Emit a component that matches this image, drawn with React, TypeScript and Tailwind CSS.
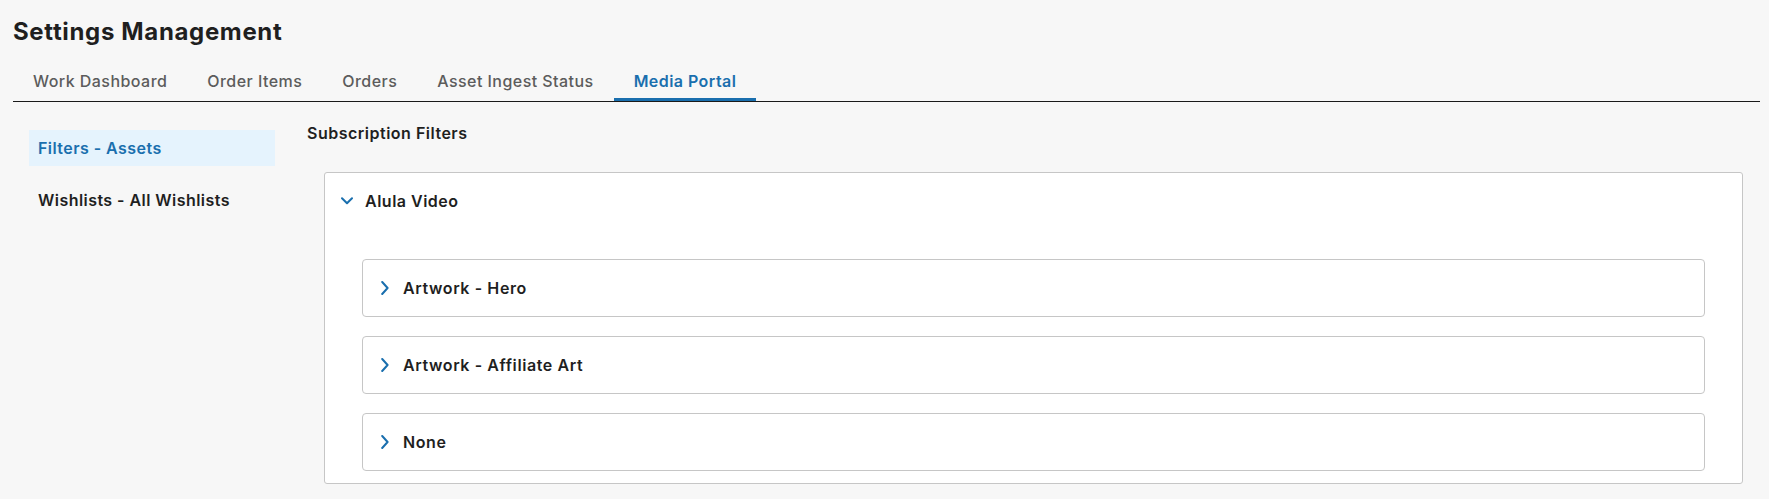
import React, { useState } from "react";

const tabs = ["Work Dashboard", "Order Items", "Orders", "Asset Ingest Status", "Media Portal"];
const sideItems = ["Filters - Assets", "Wishlists - All Wishlists"];
const groups = ["Artwork - Hero", "Artwork - Affiliate Art", "None"];

function CaretDown() {
  return (
    <svg width="12" height="8" viewBox="0 0 12 8" fill="none" className="shrink-0">
      <polyline points="1,1.2 6,6.2 11,1.2" stroke="#1a6fae" strokeWidth="2" strokeLinecap="round" strokeLinejoin="round" />
    </svg>
  );
}

function CaretRight() {
  return (
    <svg width="8" height="14" viewBox="0 0 8 14" fill="none" className="shrink-0">
      <polyline points="1.2,1 6.6,7 1.2,13" stroke="#1a6fae" strokeWidth="2" strokeLinecap="round" strokeLinejoin="round" />
    </svg>
  );
}

export default function App() {
  const [activeTab, setActiveTab] = useState("Media Portal");
  const [activeSide, setActiveSide] = useState("Filters - Assets");
  const [open, setOpen] = useState(true);

  return (
    <div className="min-h-screen bg-[#f7f7f7] pl-[13px] pr-[9px] pt-[16px] font-['Inter',sans-serif] text-[#1f1f1f]">
      <h1 className="text-[24px] font-bold leading-[32px] tracking-[0.65px]">Settings Management</h1>

      {/* tab strip */}
      <div className="mt-[13px] flex border-b border-[#1a1a1a]">
        {tabs.map((t) => (
          <button
            key={t}
            onClick={() => setActiveTab(t)}
            className={`flex h-[40px] items-center border-b-[3px] px-[20px] pt-[3px] text-[16px] tracking-[0.45px] ${
              activeTab === t ? "border-[#1a6fae] font-semibold text-[#1a6fae]" : "border-transparent font-medium text-[#5c5c5c]"
            }`}
          >
            {t}
          </button>
        ))}
      </div>

      <div className="flex gap-[32px] pl-[16px] pt-[28px]">
        {/* side menu */}
        <div className="flex w-[246px] shrink-0 flex-col gap-[16px]">
          {sideItems.map((s) => (
            <button
              key={s}
              onClick={() => setActiveSide(s)}
              className={`flex h-[36px] items-center px-[9px] text-left text-[16px] font-semibold tracking-[0.45px] ${
                activeSide === s ? "bg-[#e5f3fd] text-[#1a6fae]" : "text-[#1f1f1f]"
              }`}
            >
              {s}
            </button>
          ))}
        </div>

        {/* filters */}
        <div className="flex-1">
          <h2 className="flex h-[6px] items-center text-[16px] font-semibold tracking-[0.5px]">Subscription Filters</h2>
          <div className="mx-[17px] mt-[36px] rounded-[3px] border border-[#c6c6c6] bg-white pb-[12px]">
            <button
              onClick={() => setOpen(!open)}
              className="flex h-[55px] w-full items-center gap-[12px] pl-[16px] text-[16px] font-semibold tracking-[0.5px]"
            >
              <CaretDown />
              Alula Video
            </button>
            {open && (
              <div className="flex flex-col gap-[19px] px-[37px] pt-[31px]">
                {groups.map((g) => (
                  <div
                    key={g}
                    className="flex h-[58px] items-center gap-[14px] rounded-[4px] border border-[#c6c6c6] pl-[18px] text-[16px] font-semibold tracking-[0.6px]"
                  >
                    <CaretRight />
                    {g}
                  </div>
                ))}
              </div>
            )}
          </div>
        </div>
      </div>
    </div>
  );
}
